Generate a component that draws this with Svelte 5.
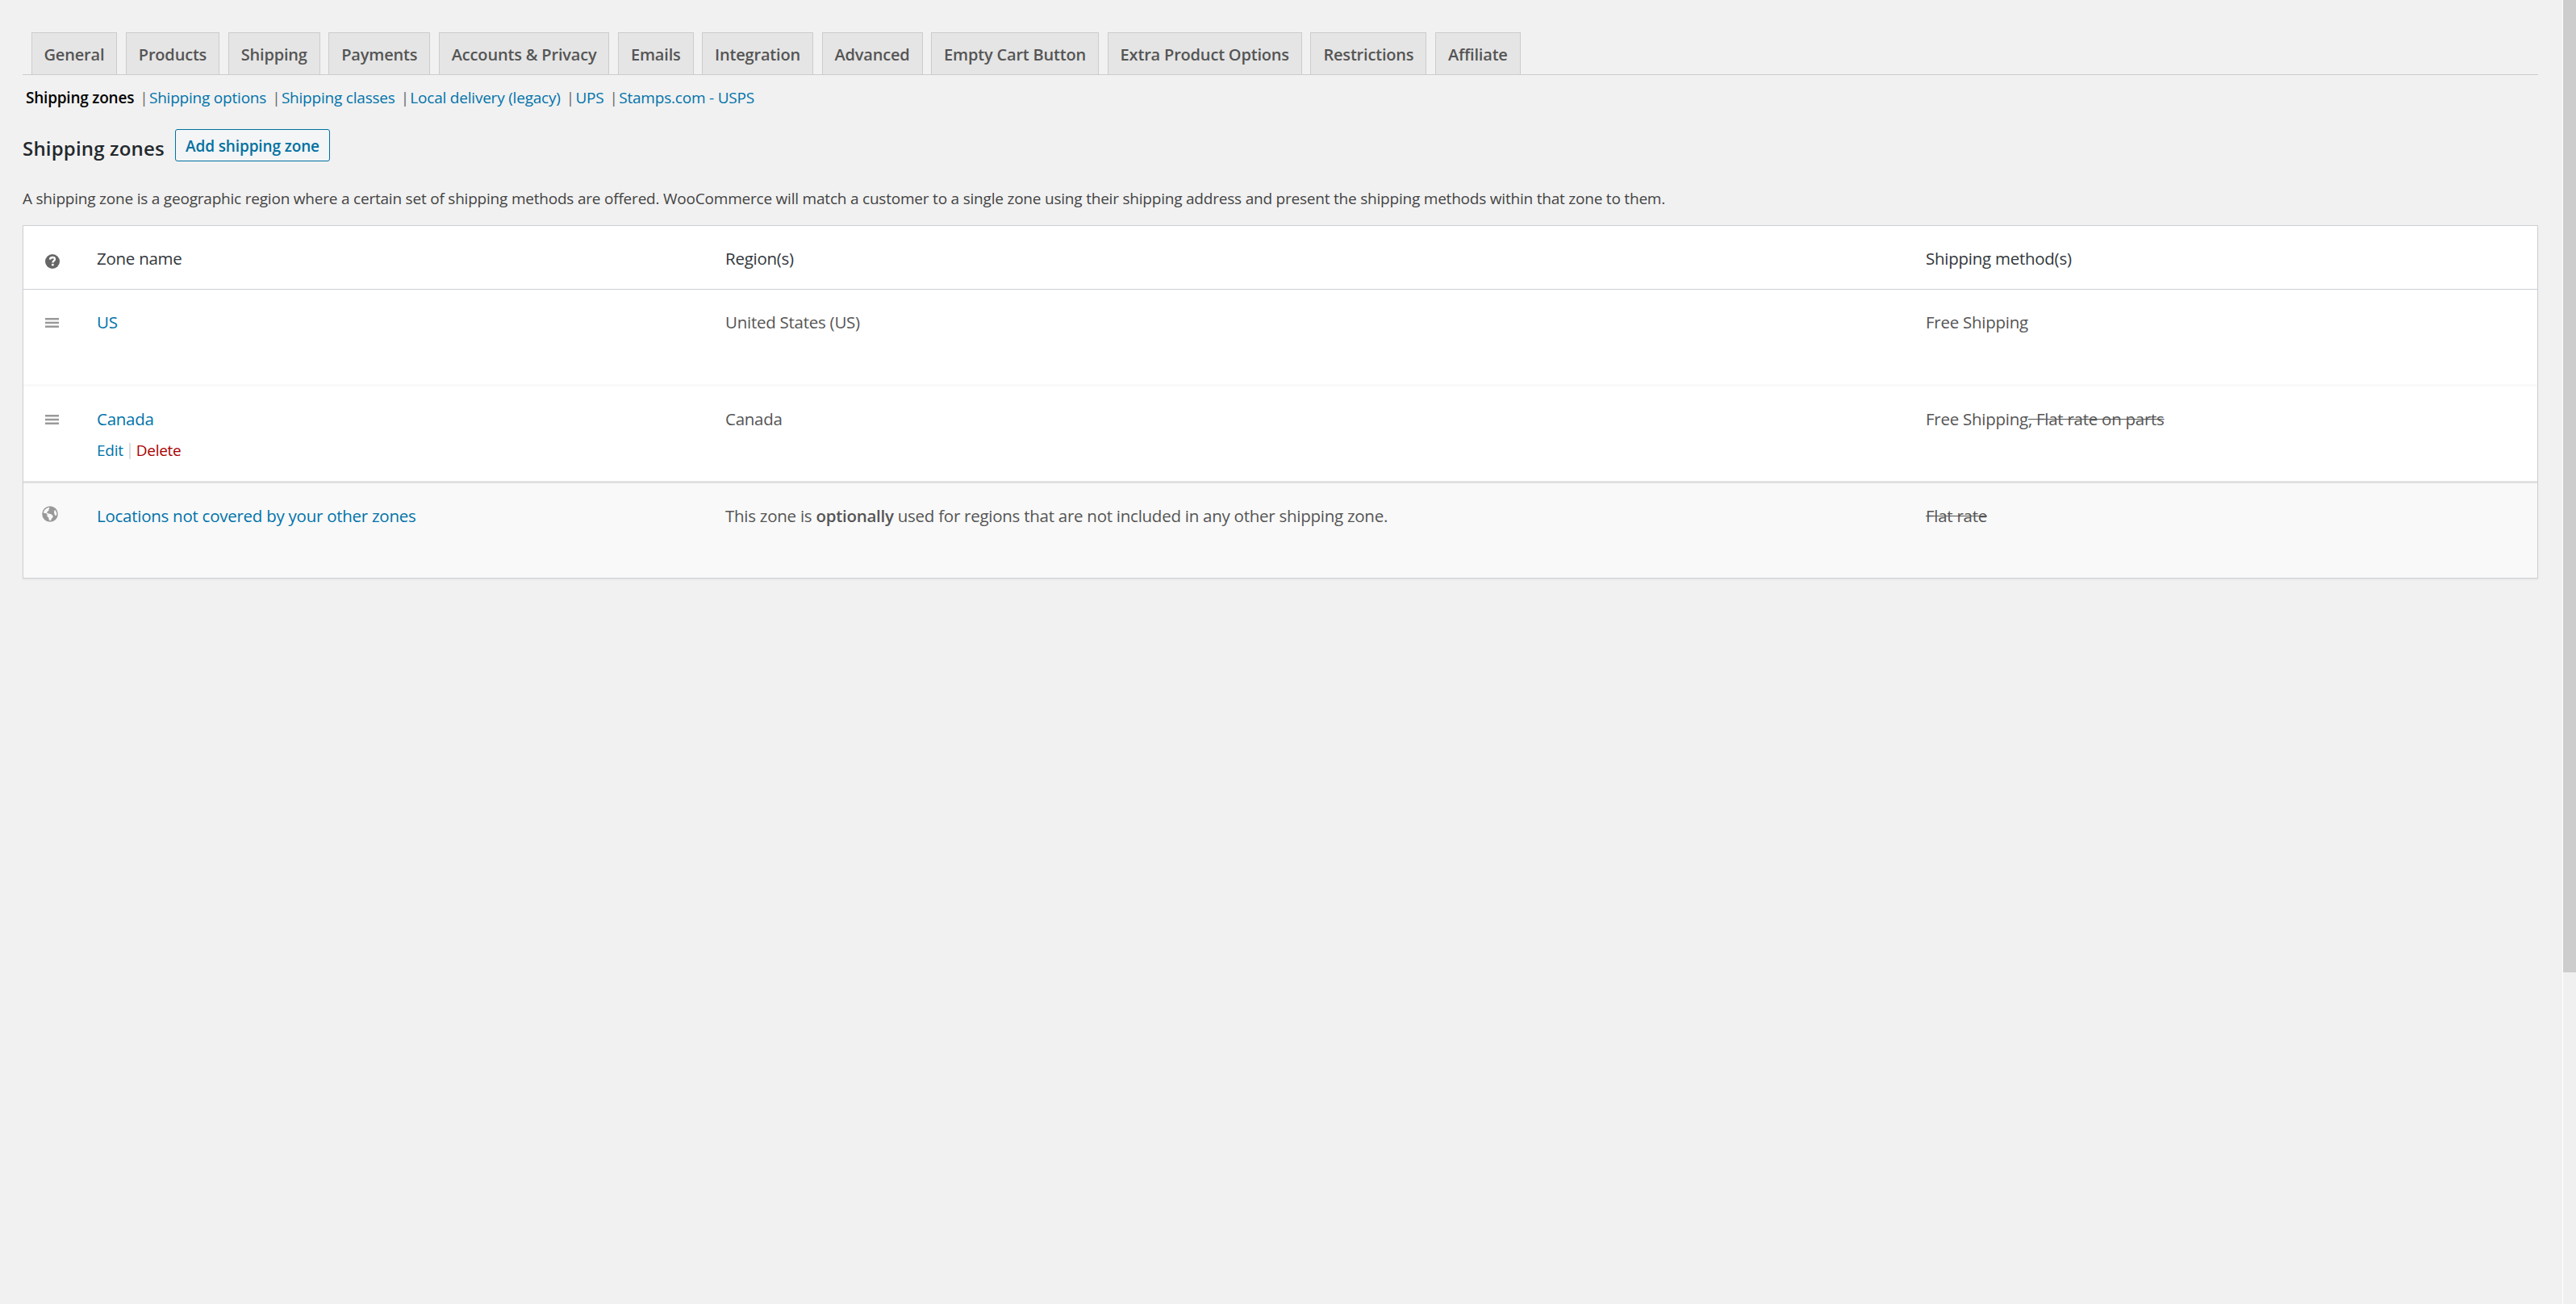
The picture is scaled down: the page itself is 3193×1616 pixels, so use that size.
<script>
const tabs = ['General', 'Products', 'Shipping', 'Payments', 'Accounts & Privacy', 'Emails', 'Integration', 'Advanced', 'Empty Cart Button', 'Extra Product Options', 'Restrictions', 'Affiliate'];
const sections = ['Shipping zones', 'Shipping options', 'Shipping classes', 'Local delivery (legacy)', 'UPS', 'Stamps.com - USPS'];
let current = 'Shipping zones';

const zones = [
    { name: 'US', region: 'United States (US)', methods: [{ title: 'Free Shipping', enabled: true }], actions: false },
    { name: 'Canada', region: 'Canada', methods: [{ title: 'Free Shipping', enabled: true }, { title: 'Flat rate on parts', enabled: false }], actions: true }
];
</script>

<div class="screen">
    <div class="wrap">
        <nav class="tabs">
            {#each tabs as tab}
            <a href="#tab" class="tab">{tab}</a>
            {/each}
        </nav>

        <ul class="subnav">
            {#each sections as section, i}
            <li>
                <a href="#section" class:current={section === current}>{section}</a>{#if i < sections.length - 1}<span class="bar">|</span>{/if}
            </li>
            {/each}
        </ul>

        <div class="heading">
            <h2>Shipping zones</h2>
            <a href="#add" class="add">Add shipping zone</a>
        </div>
        <p class="intro">A shipping zone is a geographic region where a certain set of shipping methods are offered. WooCommerce will match a customer to a single zone using their shipping address and present the shipping methods within that zone to them.</p>

        <div class="zones">
            <div class="row head">
                <div class="icon">
                    <svg class="help" viewBox="0 0 18 18">
                        <circle cx="9" cy="9" r="9" fill="#666" />
                        <path d="M6 6.6C6.100 4.700 7.300 4 9.100 4c1.800 0 2.900.8 2.900 2.300 0 1.900-2.600 1.900-2.600 4.200" fill="none" stroke="#fff" stroke-width="2.300" />
                        <rect x="8.100" y="11.900" width="2.500" height="2.500" fill="#fff" />
                    </svg>
                </div>
                <div>Zone name</div>
                <div>Region(s)</div>
                <div>Shipping method(s)</div>
            </div>
            {#each zones as zone}
            <div class="row zone">
                <div class="icon">
                    <svg class="sort" viewBox="0 0 17 12">
                        <path d="M0 1.2h17M0 6h17M0 10.8h17" stroke="#999" stroke-width="2.4" />
                    </svg>
                </div>
                <div>
                    <a href="#zone">{zone.name}</a>
                    {#if zone.actions}
                    <div class="actions"><a href="#edit">Edit</a><span class="sep"></span><a href="#delete" class="delete">Delete</a></div>
                    {/if}
                </div>
                <div>{zone.region}</div>
                <div>{#each zone.methods as method, i}<span class:off={!method.enabled}>{i ? ', ' : ''}{method.title}</span>{/each}</div>
            </div>
            {/each}
            <div class="row rest">
                <div class="icon">
                    <svg class="globe" viewBox="0 0 20 20">
                        <circle cx="10" cy="10" r="9.8" fill="#999" />
                        <path d="M1.8 8.4C2.4 5.3 4.8 2.500 8.700 1.700l.8 1.200-1.200 1.400.2 1.500-1.700 1.200-1 1.500 1.500.3 1.200 1.200-1.500.6-1.800-1.400-2.600-.5z" fill="#f9f9f9" />
                        <path d="M6.200 10.800l2.600-1.200 2.600.6 2.300 2-.3 2-1.700 1.700-.4 1.500-1.500 1.100-1.200-1.700-.3-2.200-1.700-1.500z" fill="#f9f9f9" />
                        <path d="M15.500 5.200l1.300.4 1.200 2.400.3 2.500-1.200 1.900-1.500-1.800-.6-2.500z" fill="#f9f9f9" />
                    </svg>
                </div>
                <div><a href="#rest">Locations not covered by your other zones</a></div>
                <div>This zone is <b>optionally</b> used for regions that are not included in any other shipping zone.</div>
                <div><span class="off">Flat rate</span></div>
            </div>
        </div>
    </div>
    <div class="scrollbar"><div class="thumb"></div></div>
</div>

<style>
:global(body) {
    margin: 0;
    background: #f1f1f1;
}

.screen {
    display: flex;
    height: 1616px;
    font-family: "Open Sans", sans-serif;
    font-size: 19px;
    letter-spacing: -0.21px;
    color: #444;
}

a {
    color: #0073aa;
    text-decoration: none;
}

.wrap {
    flex: 1;
    padding: 40px 30px 0 28px;
}

.tabs {
    display: flex;
    gap: 10.5px;
    padding-left: 10.5px;
    border-bottom: 1px solid #ccc;
}

.tab {
    padding: 9px 15px 6px;
    border: 1px solid #ccc;
    border-bottom: none;
    background: #e5e5e5;
    color: #555;
    font-size: 20px;
    font-weight: 600;
    letter-spacing: -0.185px;
    line-height: 36px;
    white-space: nowrap;
}

.subnav {
    display: flex;
    margin: 13px 0 0;
    padding: 0 0 0 4px;
    list-style: none;
    line-height: 30px;
}

.subnav .current {
    color: #000;
    font-weight: 600;
    letter-spacing: -0.22px;
}

.bar {
    margin: 0 1.5px 0 7px;
    color: #666;
}

.heading {
    display: flex;
    margin-top: 24px;
}

h2 {
    width: 189px;
    margin: 6px 0 0;
    color: #23282d;
    font-size: 24px;
    font-weight: 600;
    letter-spacing: 0.18px;
    line-height: 36px;
}

.add {
    height: 38px;
    padding: 0 12px;
    border: 1px solid #0071a1;
    border-radius: 3px;
    background: #f3f5f6;
    color: #0071a1;
    font-weight: 600;
    letter-spacing: -0.12px;
    line-height: 40px;
}

.intro {
    margin: 29px 0 18px;
    line-height: 30px;
    white-space: nowrap;
}

.zones {
    border: 1px solid #ccd0d4;
    background: #fff;
    box-shadow: 0 2px 2px rgba(0, 0, 0, 0.04);
    color: #555;
    font-size: 20.5px;
    letter-spacing: -0.26px;
    line-height: 32px;
}

.row {
    display: grid;
    grid-template-columns: 91px 779px 1488px 1fr;
    box-sizing: border-box;
    height: 120px;
    padding-top: 24px;
    border-bottom: 3px solid #f9f9f9;
    white-space: nowrap;
}

.row.head {
    height: 79px;
    border-bottom: 1px solid #ccd0d4;
    color: #32373c;
}

.row.zone:nth-child(3) {
    border-bottom-color: #e1e1e1;
}

.row.rest {
    height: 117px;
    border-bottom: none;
    background: #f9f9f9;
}

.icon svg {
    display: block;
}

.help {
    width: 18px;
    height: 18px;
    margin: 11px 0 0 27px;
}

.sort {
    width: 17px;
    height: 12px;
    margin: 11px 0 0 27px;
}

.globe {
    width: 20px;
    height: 20px;
    margin: 4px 0 0 23px;
}

.actions {
    display: flex;
    align-items: center;
    margin-top: 8px;
    font-size: 19px;
    line-height: 30px;
}

.sep {
    width: 2px;
    height: 20px;
    margin: 2px 7px 0;
    background: #ddd;
}

.delete {
    color: #a00;
}

.off {
    text-decoration: line-through;
    text-decoration-thickness: 1px;
}

b {
    font-weight: 600;
}

.scrollbar {
    width: 16px;
    border-left: 1px solid #fff;
    background: #f0f0f0;
}

.thumb {
    height: 1205px;
    background: #cdcdcd;
}
</style>
